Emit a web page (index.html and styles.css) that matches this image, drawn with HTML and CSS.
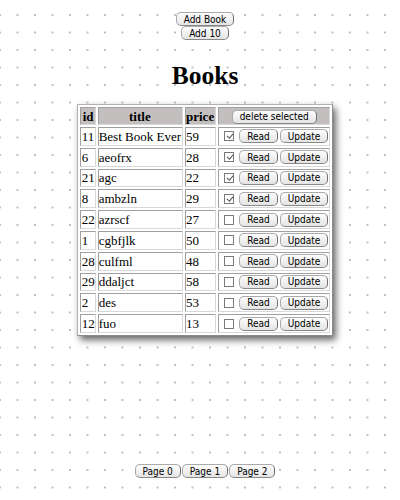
FILE: index.html
```html
<!DOCTYPE html>
<html>
<head>
<meta charset="utf-8">
<link rel="stylesheet" href="styles.css">
</head>
<body>
<div class="page">
  <div class="top-actions">
    <button class="btn">Add Book</button>
    <button class="btn">Add 10</button>
  </div>
  <h1 class="title">Books</h1>
  <div class="table-area">
    <table class="books">
      <thead>
        <tr>
          <th class="c-id">id</th>
          <th>title</th>
          <th>price</th>
          <th class="c-acts"><button class="btn">delete selected</button></th>
        </tr>
      </thead>
      <tbody>
        <tr><td class="c-id">11</td><td>Best Book Ever</td><td>59</td><td class="c-acts"><div class="acts"><span class="cb checked"></span><button class="btn">Read</button><button class="btn">Update</button></div></td></tr>
        <tr><td class="c-id">6</td><td>aeofrx</td><td>28</td><td class="c-acts"><div class="acts"><span class="cb checked"></span><button class="btn">Read</button><button class="btn">Update</button></div></td></tr>
        <tr><td class="c-id">21</td><td>agc</td><td>22</td><td class="c-acts"><div class="acts"><span class="cb checked"></span><button class="btn">Read</button><button class="btn">Update</button></div></td></tr>
        <tr><td class="c-id">8</td><td>ambzln</td><td>29</td><td class="c-acts"><div class="acts"><span class="cb checked"></span><button class="btn">Read</button><button class="btn">Update</button></div></td></tr>
        <tr><td class="c-id">22</td><td>azrscf</td><td>27</td><td class="c-acts"><div class="acts"><span class="cb"></span><button class="btn">Read</button><button class="btn">Update</button></div></td></tr>
        <tr><td class="c-id">1</td><td>cgbfjlk</td><td>50</td><td class="c-acts"><div class="acts"><span class="cb"></span><button class="btn">Read</button><button class="btn">Update</button></div></td></tr>
        <tr><td class="c-id">28</td><td>culfml</td><td>48</td><td class="c-acts"><div class="acts"><span class="cb"></span><button class="btn">Read</button><button class="btn">Update</button></div></td></tr>
        <tr><td class="c-id">29</td><td>ddaljct</td><td>58</td><td class="c-acts"><div class="acts"><span class="cb"></span><button class="btn">Read</button><button class="btn">Update</button></div></td></tr>
        <tr><td class="c-id">2</td><td>des</td><td>53</td><td class="c-acts"><div class="acts"><span class="cb"></span><button class="btn">Read</button><button class="btn">Update</button></div></td></tr>
        <tr><td class="c-id">12</td><td>fuo</td><td>13</td><td class="c-acts"><div class="acts"><span class="cb"></span><button class="btn">Read</button><button class="btn">Update</button></div></td></tr>
      </tbody>
    </table>
  </div>
  <div class="pager">
    <button class="btn">Page 0</button><button class="btn">Page 1</button><button class="btn">Page 2</button>
  </div>
</div>
</body>
</html>
```
FILE: styles.css
```css
html, body {
  margin: 0;
  padding: 0;
  height: 100%;
}
body {
  background-color: #fff;
  background-image: radial-gradient(circle, #b4c0ca 0.8px, transparent 1.2px);
  background-size: 17.5px 17.5px;
  background-position: -8.75px 6.25px;
  font-family: "Liberation Serif", serif;
  font-size: 13px;
  color: #000;
}
.page {
  display: flex;
  flex-direction: column;
  align-items: center;
  height: 500px;
  box-sizing: border-box;
  padding-left: 10px;
}
.top-actions {
  margin-top: 12px;
  display: flex;
  flex-direction: column;
  align-items: center;
  gap: 0;
}
.btn {
  font-family: "DejaVu Sans Condensed", "DejaVu Sans", Verdana, sans-serif;
  font-stretch: condensed;
  font-size: 10px;
  line-height: 11px;
  height: 14px;
  box-sizing: border-box;
  padding: 0 7px;
  margin: 0;
  color: #000;
  background: linear-gradient(#fdfdfd, #e4e4e4);
  border: 1px solid #aaa;
  border-right-color: #6f6f6f;
  border-bottom-color: #888;
  border-radius: 5px;
}
.title {
  font-family: "Liberation Serif", serif;
  font-weight: bold;
  font-size: 25.5px;
  line-height: 28px;
  margin: 22px 0 0 0;
}
.table-area {
  margin-top: 14px;
  height: 346px;
}
.books {
  border-collapse: separate;
  border-spacing: 2px;
  border: 1px solid #8a8a8a;
  border-top-color: #b0b0b0;
  border-left-color: #b0b0b0;
  background: #fff;
  box-shadow: 3px 4px 7px rgba(0,0,0,0.6);
}
.books th, .books td {
  box-sizing: border-box;
  border: 1px solid #a0a0a0;
  border-right-color: #d8d8d8;
  border-bottom-color: #d8d8d8;
  padding: 0 1px 0 0;
  height: 18.8px;
  text-align: left;
  white-space: nowrap;
  line-height: 15px;
}
.books th {
  background: #c3bfbf;
  text-align: center;
  font-weight: bold;
  height: 18px;
}
.books .c-id {
  padding: 0 0 0 1px;
}
.books td.c-acts {
  padding: 0 1px 0 5px;
}
.books th.c-acts {
  padding: 0 1px;
}
.acts {
  display: flex;
  align-items: center;
}
.acts .btn {
  margin-left: 2px;
}
.acts .cb + .btn {
  margin-left: 5px;
}
.cb {
  display: inline-block;
  box-sizing: border-box;
  width: 10px;
  height: 10px;
  border: 1px solid #7a7a7a;
  background: #fff;
  position: relative;
}
.cb.checked::after {
  content: "";
  position: absolute;
  left: 2.5px;
  top: 0px;
  width: 2.5px;
  height: 5px;
  border: solid #555;
  border-width: 0 1px 1px 0;
  transform: rotate(40deg);
}
.pager {
  margin-top: auto;
  margin-bottom: 22px;
  display: flex;
  gap: 1px;
}
```
